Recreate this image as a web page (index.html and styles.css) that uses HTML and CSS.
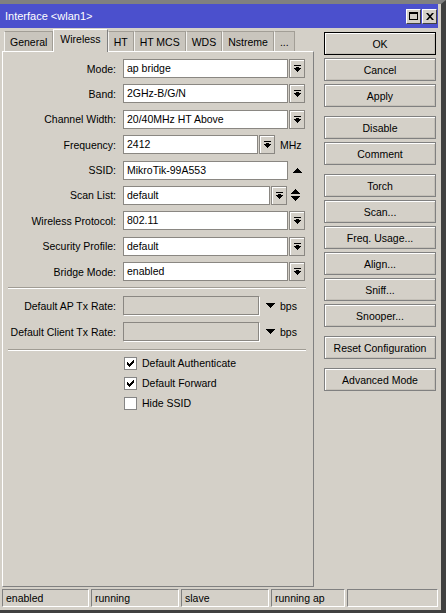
FILE: index.html
```html
<!DOCTYPE html>
<html lang="en">
<head>
  <meta charset="UTF-8" />
  <title>Interface &lt;wlan1&gt;</title>
  <link rel="stylesheet" href="styles.css">
</head>
<body>
  <div class="window">
    <div class="titlebar">
      <span class="title">Interface &lt;wlan1&gt;</span>
      <div class="title-btns">
        <span class="tbtn"><svg width="9" height="8" viewBox="0 0 9 8"><path d="M0 0h9v2H0zM0 2h1v6H0zM8 2h1v6H8zM0 7h9v1H0z"/></svg></span>
        <span class="tbtn"><svg width="8" height="7" viewBox="0 0 8 7"><path d="M0 0h2l2 2.2L6 0h2L5 3.5 8 7H6L4 4.8 2 7H0l3-3.5z"/></svg></span>
      </div>
    </div>

    <div class="main">
      <div class="left">
        <div class="tabs">
          <div class="tab">General</div>
          <div class="tab active">Wireless</div>
          <div class="tab">HT</div>
          <div class="tab">HT MCS</div>
          <div class="tab">WDS</div>
          <div class="tab">Nstreme</div>
          <div class="tab">...</div>
        </div>
        <div class="panel">
          <div class="form">
            <div class="row">
              <span class="label">Mode:</span>
              <span class="field">ap bridge</span>
              <span class="drop"><svg width="7" height="7" viewBox="0 0 7 7"><path d="M0 0h7v1H0zM2 2h3v1H2zM0 3h7v1H0zM1 4h5v1H1zM2 5h3v1H2zM3 6h1v1H3z"/></svg></span>
            </div>
            <div class="row">
              <span class="label">Band:</span>
              <span class="field">2GHz-B/G/N</span>
              <span class="drop"><svg width="7" height="7" viewBox="0 0 7 7"><path d="M0 0h7v1H0zM2 2h3v1H2zM0 3h7v1H0zM1 4h5v1H1zM2 5h3v1H2zM3 6h1v1H3z"/></svg></span>
            </div>
            <div class="row">
              <span class="label">Channel Width:</span>
              <span class="field">20/40MHz HT Above</span>
              <span class="drop"><svg width="7" height="7" viewBox="0 0 7 7"><path d="M0 0h7v1H0zM2 2h3v1H2zM0 3h7v1H0zM1 4h5v1H1zM2 5h3v1H2zM3 6h1v1H3z"/></svg></span>
            </div>
            <div class="row">
              <span class="label">Frequency:</span>
              <span class="field field-freq">2412</span>
              <span class="drop"><svg width="7" height="7" viewBox="0 0 7 7"><path d="M0 0h7v1H0zM2 2h3v1H2zM0 3h7v1H0zM1 4h5v1H1zM2 5h3v1H2zM3 6h1v1H3z"/></svg></span>
              <span class="unit">MHz</span>
            </div>
            <div class="row">
              <span class="label">SSID:</span>
              <span class="field">MikroTik-99A553</span>
              <span class="arrow arrow-ssid"><svg width="9" height="5" viewBox="0 0 9 5"><path d="M4 0h1v1H4zM3 1h3v1H3zM2 2h5v1H2zM1 3h7v1H1zM0 4h9v1H0z"/></svg></span>
            </div>
            <div class="row">
              <span class="label">Scan List:</span>
              <span class="field field-scan">default</span>
              <span class="drop"><svg width="7" height="7" viewBox="0 0 7 7"><path d="M0 0h7v1H0zM2 2h3v1H2zM0 3h7v1H0zM1 4h5v1H1zM2 5h3v1H2zM3 6h1v1H3z"/></svg></span>
              <span class="arrow arrow-updown"><svg width="9" height="12" viewBox="0 0 9 12"><path d="M4 0h1v1H4zM3 1h3v1H3zM2 2h5v1H2zM1 3h7v1H1zM0 4h9v1H0zM0 7h9v1H0zM1 8h7v1H1zM2 9h5v1H2zM3 10h3v1H3zM4 11h1v1H4z"/></svg></span>
            </div>
            <div class="row">
              <span class="label">Wireless Protocol:</span>
              <span class="field">802.11</span>
              <span class="drop"><svg width="7" height="7" viewBox="0 0 7 7"><path d="M0 0h7v1H0zM2 2h3v1H2zM0 3h7v1H0zM1 4h5v1H1zM2 5h3v1H2zM3 6h1v1H3z"/></svg></span>
            </div>
            <div class="row">
              <span class="label">Security Profile:</span>
              <span class="field">default</span>
              <span class="drop"><svg width="7" height="7" viewBox="0 0 7 7"><path d="M0 0h7v1H0zM2 2h3v1H2zM0 3h7v1H0zM1 4h5v1H1zM2 5h3v1H2zM3 6h1v1H3z"/></svg></span>
            </div>
            <div class="row">
              <span class="label">Bridge Mode:</span>
              <span class="field">enabled</span>
              <span class="drop"><svg width="7" height="7" viewBox="0 0 7 7"><path d="M0 0h7v1H0zM2 2h3v1H2zM0 3h7v1H0zM1 4h5v1H1zM2 5h3v1H2zM3 6h1v1H3z"/></svg></span>
            </div>
          </div>

          <div class="sep"></div>

          <div class="form form-rates">
            <div class="row">
              <span class="label">Default AP Tx Rate:</span>
              <span class="field field-rate disabled"></span>
              <span class="arrow arrow-rate"><svg width="9" height="5" viewBox="0 0 9 5"><path d="M0 0h9v1H0zM1 1h7v1H1zM2 2h5v1H2zM3 3h3v1H3zM4 4h1v1H4z"/></svg></span>
              <span class="unit">bps</span>
            </div>
            <div class="row">
              <span class="label">Default Client Tx Rate:</span>
              <span class="field field-rate disabled"></span>
              <span class="arrow arrow-rate"><svg width="9" height="5" viewBox="0 0 9 5"><path d="M0 0h9v1H0zM1 1h7v1H1zM2 2h5v1H2zM3 3h3v1H3zM4 4h1v1H4z"/></svg></span>
              <span class="unit">bps</span>
            </div>
          </div>

          <div class="sep sep-2"></div>

          <div class="checks">
            <div class="check-row">
              <span class="cb"><svg width="11" height="11" viewBox="0 0 11 11"><path d="M2 4h1v3H2zM3 5h1v3H3zM4 6h1v3H4zM5 5h1v3H5zM6 4h1v3H6zM7 3h1v3H7zM8 2h1v3H8z"/></svg></span>
              <span>Default Authenticate</span>
            </div>
            <div class="check-row">
              <span class="cb"><svg width="11" height="11" viewBox="0 0 11 11"><path d="M2 4h1v3H2zM3 5h1v3H3zM4 6h1v3H4zM5 5h1v3H5zM6 4h1v3H6zM7 3h1v3H7zM8 2h1v3H8z"/></svg></span>
              <span>Default Forward</span>
            </div>
            <div class="check-row">
              <span class="cb"></span>
              <span>Hide SSID</span>
            </div>
          </div>
        </div>
      </div>

      <div class="buttons">
        <div class="btn btn-default">OK</div>
        <div class="btn">Cancel</div>
        <div class="btn group-end">Apply</div>
        <div class="btn">Disable</div>
        <div class="btn group-end">Comment</div>
        <div class="btn">Torch</div>
        <div class="btn">Scan...</div>
        <div class="btn">Freq. Usage...</div>
        <div class="btn">Align...</div>
        <div class="btn">Sniff...</div>
        <div class="btn group-end">Snooper...</div>
        <div class="btn group-end">Reset Configuration</div>
        <div class="btn">Advanced Mode</div>
      </div>
    </div>

    <div class="status">
      <div class="cell cell-1">enabled</div>
      <div class="cell cell-2">running</div>
      <div class="cell cell-2">slave</div>
      <div class="cell cell-4">running ap</div>
      <div class="cell cell-5"></div>
    </div>
  </div>
</body>
</html>
```

FILE: styles.css
```css
body {
  margin: 0;
  font-family: "Liberation Sans", Arial, sans-serif;
  font-size: 10.5px;
  color: #000;
  background: #d4d0c8;
}
.window {
  width: 446px;
  height: 613px;
  box-sizing: border-box;
  border-top: 4px solid #808080;
  border-right: 5px solid #404040;
  border-bottom: 3px solid #404040;
  padding-right: 3px;
  background: #d4d0c8;
  display: flex;
  flex-direction: column;
}

/* title bar */
.titlebar {
  height: 24px;
  flex: none;
  background: #4b50cd;
  color: #fff;
  display: flex;
  align-items: center;
  justify-content: space-between;
  padding: 0 1px 0 5px;
}
.title { font-size: 11px; }
.title-btns { display: flex; gap: 1px; }
.tbtn {
  width: 15px;
  height: 15px;
  box-sizing: border-box;
  background: #d4d0c8;
  border: 1px solid;
  border-color: #fff #404040 #404040 #fff;
  display: flex;
  align-items: center;
  justify-content: center;
}

.main {
  height: 559px;
  flex: none;
  display: flex;
  padding-left: 2px;
}
.left {
  width: 312px;
  display: flex;
  flex-direction: column;
  padding-top: 1px;
}

/* tabs */
.tabs {
  display: flex;
  align-items: flex-end;
  height: 23px;
  padding-left: 2px;
  margin-bottom: -1px;
  position: relative;
  z-index: 1;
}
.tab {
  height: 20px;
  box-sizing: border-box;
  padding: 4px 5px 0;
  margin-bottom: 1px;
  border: 1px solid #a29e96;
  border-left-color: #f4f3f0;
  border-bottom: none;
  background: #c9c5bd;
  white-space: nowrap;
}
.tab.active {
  height: 23px;
  margin-bottom: 0;
  padding: 3px 6px 0;
  background: #d4d0c8;
  border-color: #fff #808080 #d4d0c8 #fff;
}

.panel {
  flex: 1;
  border: 1px solid;
  border-color: #fff #808080 #808080 #fff;
}

/* form rows */
.form {
  padding-top: 7px;
  display: flex;
  flex-direction: column;
  gap: 6.4px;
}
.form-rates { padding-top: 7px; gap: 7px; }
.row {
  display: flex;
  align-items: center;
  height: 19px;
}
.label {
  width: 113px;
  margin-right: 7px;
  text-align: right;
  white-space: nowrap;
}
.field {
  width: 165px;
  height: 19px;
  box-sizing: border-box;
  background: #fff;
  border: 1px solid #8a8782;
  padding-left: 3px;
  line-height: 17px;
  white-space: nowrap;
}
.field-freq { width: 135px; }
.field-scan { width: 147px; }
.field-rate { width: 136px; }
.field.disabled { background: #d4d0c8; box-shadow: 1px 1px 0 #fff; }
.drop {
  width: 16px;
  height: 19px;
  margin-left: 1px;
  box-sizing: border-box;
  background: #d4d0c8;
  border: 1px solid #8a8782;
  box-shadow: inset 1px 1px 0 #fff;
  display: flex;
  align-items: center;
  justify-content: center;
}
.unit { margin-left: 5px; }
.arrow { display: flex; align-items: center; }
.arrow-ssid { margin-left: 5px; }
.arrow-updown { margin-left: 4px; }
.arrow-rate { margin-left: 7px; }

.sep {
  margin: 6px 7px 0 5px;
  border-top: 1px solid #a09c94;
  border-bottom: 1px solid #fff;
}
.sep-2 { margin-top: 8px; }

/* checkboxes */
.checks { padding-top: 2px; }
.check-row {
  display: flex;
  align-items: center;
  height: 20px;
  padding-left: 121px;
}
.cb {
  width: 13px;
  height: 13px;
  box-sizing: border-box;
  margin-right: 5px;
  background: #fff;
  border: 1px solid #858585;
  display: flex;
}

/* right side buttons */
.buttons {
  width: 112px;
  margin-left: 10px;
  padding-top: 4px;
  display: flex;
  flex-direction: column;
}
.btn {
  height: 23px;
  flex: none;
  box-sizing: border-box;
  margin-bottom: 3px;
  border: 1px solid #808080;
  box-shadow: inset 1px 1px 0 #fff, inset -1px -1px 0 #c4c0b8;
  display: flex;
  align-items: center;
  justify-content: center;
  white-space: nowrap;
}
.btn-default { border-color: #000; }
.btn.group-end { margin-bottom: 9px; }

/* status bar */
.status {
  display: flex;
  gap: 2px;
  height: 18px;
  flex: none;
  margin-top: 2px;
  padding-left: 2px;
  margin-bottom: 3px;
}
.cell {
  box-sizing: border-box;
  border: 1px solid;
  border-color: #808080 #fff #fff #808080;
  padding-left: 3px;
  line-height: 16px;
  white-space: nowrap;
}
.cell-1 { width: 87px; }
.cell-2 { width: 88px; }
.cell-4 { width: 74px; }
.cell-5 { flex: 1; }
```
